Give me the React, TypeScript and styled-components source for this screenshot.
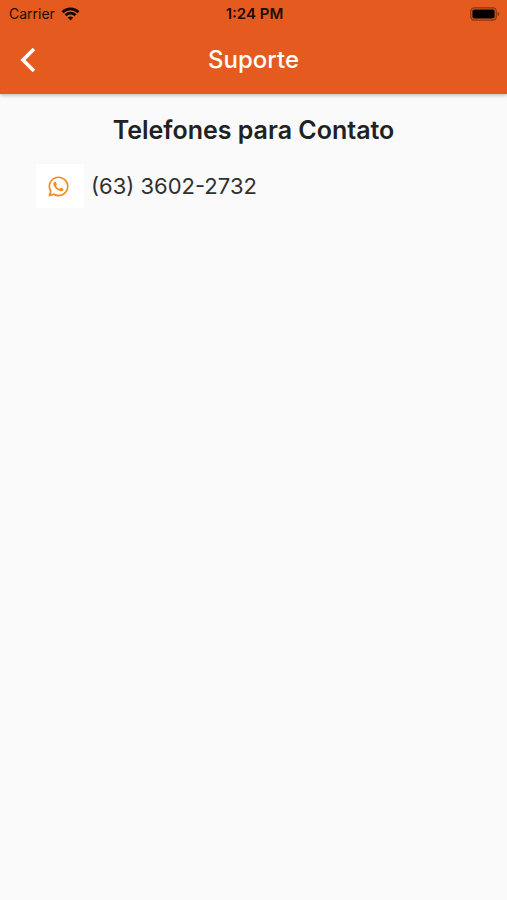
import React from "react";
import styled, { createGlobalStyle } from "styled-components";
import { FaWhatsapp } from "react-icons/fa";

const GlobalStyle = createGlobalStyle`
  * { box-sizing: border-box; }
  body {
    margin: 0;
    background: #fafafa;
    color: #212121;
    font-family: Inter, "Liberation Sans", sans-serif;
  }
`;

const Header = styled.header`
  background: #e55b1f;
  box-shadow: 0 1px 4px rgba(0, 0, 0, 0.3);
`;

const StatusBar = styled.div`
  display: grid;
  grid-template-columns: 1fr auto 1fr;
  align-items: center;
  height: 26px;
  padding: 0 7px 0 9px;
  color: #220a00;
  font-size: 14px;
  line-height: 28px;
`;

const Carrier = styled.div`
  display: flex;
  align-items: center;
  gap: 6px;
`;

const Clock = styled.time`
  font-size: 15px;
  font-weight: 600;
`;

const BatteryIcon = styled.svg`
  justify-self: end;
`;

const NavBar = styled.div`
  display: grid;
  grid-template-columns: 56px 1fr 56px;
  align-items: center;
  height: 68px;
`;

const BackButton = styled.button`
  display: flex;
  align-items: center;
  justify-content: center;
  height: 48px;
  padding: 0;
  border: 0;
  background: transparent;
  color: #fff;
  cursor: pointer;
`;

const Title = styled.h1`
  margin: 0;
  color: #fff;
  font-size: 24px;
  font-weight: 500;
  line-height: 32px;
  text-align: center;
`;

const Content = styled.main`
  padding: 20px 36px;
`;

const SectionTitle = styled.h2`
  margin: 0;
  font-size: 25px;
  font-weight: 600;
  line-height: 32px;
  text-align: center;
`;

const ContactRow = styled.a`
  display: inline-flex;
  align-items: center;
  gap: 7px;
  margin-top: 18px;
  color: #303030;
  font-size: 22px;
  line-height: 28px;
  text-decoration: none;
`;

const IconTile = styled.span`
  display: flex;
  align-items: center;
  justify-content: center;
  width: 48px;
  height: 44px;
  padding-right: 4px;
  background: #fff;
  color: #f28c1e;
`;

export default function App() {
  return (
    <>
      <GlobalStyle />
      <Header>
        <StatusBar>
          <Carrier>
            <span>Carrier</span>
            <svg width="19" height="14" viewBox="0 0 18 14" aria-hidden="true">
              <g fill="none" stroke="#180500" strokeWidth="2.7">
                <path d="M1 5.2C5.4.8 12.6.8 17 5.2" />
                <path d="M4 8.2c2.8-2.7 7.2-2.7 10 0" />
              </g>
              <path d="M9 13.5 6.2 10.6c1.6-1.4 4-1.4 5.6 0Z" fill="#180500" />
            </svg>
          </Carrier>
          <Clock>1:24 PM</Clock>
          <BatteryIcon width="30" height="14" viewBox="0 0 30 14" aria-hidden="true">
            <rect x="0.8" y="0.8" width="25.4" height="12.4" rx="3.4" fill="none" stroke="#8d3713" strokeWidth="1.3" />
            <rect x="2.4" y="2.4" width="22.2" height="9.2" rx="1.8" fill="#000" />
            <path d="M27.6 4.8c2.4.8 2.4 3.6 0 4.4Z" fill="#8d3713" />
          </BatteryIcon>
        </StatusBar>
        <NavBar>
          <BackButton type="button" aria-label="Voltar">
            <svg width="16" height="26" viewBox="0 0 16 26" aria-hidden="true">
              <path d="M14 2 3 13l11 11" fill="none" stroke="currentColor" strokeWidth="3.6" />
            </svg>
          </BackButton>
          <Title>Suporte</Title>
        </NavBar>
      </Header>
      <Content>
        <SectionTitle>Telefones para Contato</SectionTitle>
        <ContactRow href="tel:+556336022732">
          <IconTile>
            <FaWhatsapp size={23} aria-hidden="true" />
          </IconTile>
          <span>(63) 3602-2732</span>
        </ContactRow>
      </Content>
    </>
  );
}
